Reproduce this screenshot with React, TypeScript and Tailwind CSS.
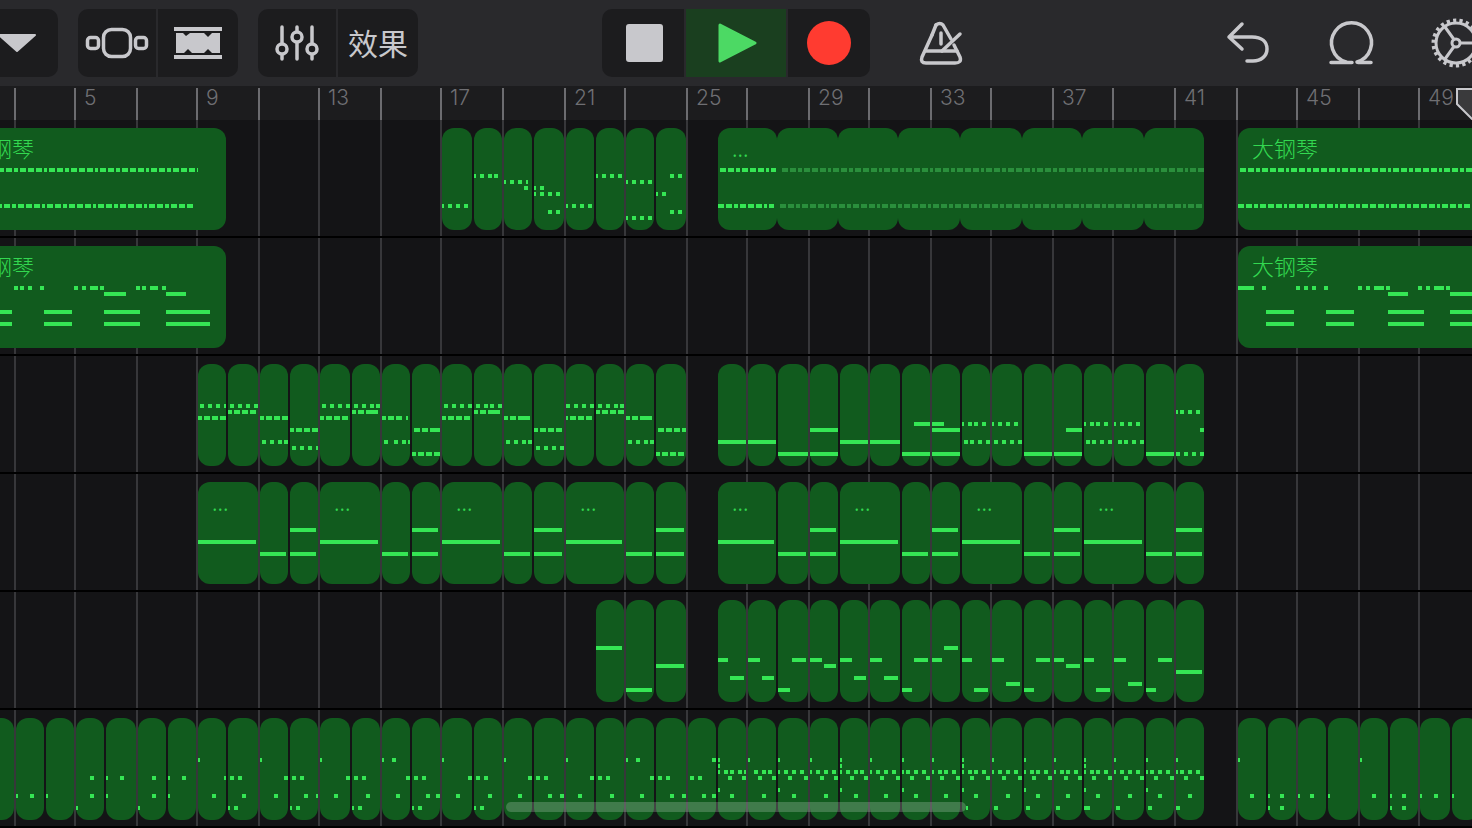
const TICKS = [14, 74, 136, 196, 258, 318, 380, 440, 502, 564, 624, 686, 746, 808, 868, 930, 990, 1052, 1112, 1174, 1236, 1296, 1358, 1418];
const LABELS: Record<number, string> = { 74: "5", 196: "9", 318: "13", 440: "17", 564: "21", 686: "25", 808: "29", 930: "33", 1052: "37", 1174: "41", 1296: "45", 1418: "49" };

type Clip = [number, number, string?];
type Notes = [number, string];

const A: Clip[] = [[198, 226], [228, 258], [260, 288], [290, 318], [320, 350], [352, 380], [382, 410], [412, 440], [442, 472], [474, 502], [504, 532], [534, 564], [566, 594], [596, 624], [626, 654], [656, 686]];
const B: Clip[] = [[718, 746], [748, 776], [778, 808], [810, 838], [840, 868], [870, 900], [902, 930], [932, 960], [962, 990], [992, 1022], [1024, 1052], [1054, 1082], [1084, 1112], [1114, 1144], [1146, 1174], [1176, 1204]];

function dashes(x0: number, x1: number) {
  const widths = [6, 6, 4, 6, 6, 6, 3];
  const parts: string[] = [];
  let x = x0;
  let i = 0;
  while (x < x1) {
    const w = widths[i % widths.length];
    parts.push(`${x}-${Math.min(x + w, x1)}`);
    x += w + 2;
    i += 1;
  }
  return parts.join(" ");
}

const TITLE = "大钢琴";

const TRACKS: { top: number; clips: Clip[]; notes: Notes[]; dim?: Notes[] }[] = [
  {
    top: 120,
    clips: [[-46, 226, TITLE], ...A.slice(8), [718, 777, "..."], [777, 838], [838, 898], [898, 960], [960, 1022], [1022, 1082], [1082, 1144], [1144, 1204], [1238, 1520, TITLE]],
    notes: [
      [170, dashes(-2, 198) + " " + dashes(1240, 1472) + " " + dashes(720, 776)],
      [206, dashes(-4, 194) + " " + dashes(1238, 1472) + " " + dashes(718, 774)],
      [206, "442-444 448-452 456-460 464-468 566-568 572-576 580-584 588-592"],
      [176, "474-476 480-484 488-492 494-498 596-598 602-606 610-614 618-622 670-674 678-682"],
      [182, "504-506 510-514 518-522 526-528 626-628 632-636 640-644 648-652"],
      [188, "524-528 534-536 540-544"],
      [194, "534-536 540-544 548-552 556-560 656-658 662-666"],
      [212, "548-552 556-560 670-674 678-682"],
      [218, "626-628 632-636 640-644 648-652"],
    ],
    dim: [
      [170, dashes(782, 1204)],
      [206, dashes(780, 1204)],
    ],
  },
  {
    top: 238,
    clips: [[-46, 226, TITLE], [1238, 1520, TITLE]],
    notes: [
      [288, "14-18 20-24 28-32 40-44 74-78 82-86 90-98 100-104 136-140 142-146 150-158 162-166 1238-1254 1262-1266 1296-1300 1304-1308 1312-1316 1324-1328 1358-1362 1366-1370 1374-1384 1386-1390 1418-1422 1426-1430 1434-1444 1446-1450"],
      [294, "104-126 166-186 1388-1408 1450-1472"],
      [312, "0-12 44-72 104-140 166-210 1266-1294 1326-1354 1388-1424 1450-1472"],
      [324, "0-12 44-72 104-140 166-210 1266-1294 1326-1354 1388-1424 1450-1472"],
    ],
  },
  {
    top: 356,
    clips: [...A, ...B],
    notes: [
      [406, "200-204 208-212 216-220 224-226 230-234 238-242 246-250 254-258 322-326 330-334 338-342 346-350 354-358 362-366 370-374 376-380 444-448 452-456 460-464 468-472 476-480 484-488 490-494 498-502 566-570 574-578 582-586 590-594 598-602 606-610 614-618 620-624"],
      [412, "228-232 234-240 242-248 250-256 352-356 358-364 366-378 474-478 480-486 488-500 596-600 602-608 610-616 618-624 1176-1178 1180-1184 1188-1192 1196-1200"],
      [418, "198-202 204-210 212-218 220-226 260-264 266-272 274-280 282-288 320-324 326-332 334-340 342-348 382-386 388-394 396-402 406-408 442-446 448-454 456-462 464-470 504-508 510-516 518-530 566-568 570-576 578-584 586-592 626-630 632-638 640-652"],
      [424, "914-930 932-944 962-964 968-972 974-978 982-986 992-994 998-1002 1006-1010 1014-1018 1084-1086 1090-1094 1096-1100 1104-1108 1114-1116 1120-1124 1128-1132 1136-1140"],
      [430, "290-294 296-302 304-310 312-318 414-420 422-428 430-440 534-538 540-546 548-554 556-562 658-664 666-672 674-680 682-686 810-838 932-960 1066-1082 1200-1204"],
      [442, "262-266 270-274 278-282 284-288 384-388 394-398 402-406 408-410 506-510 514-518 522-526 528-532 628-632 636-640 644-648 650-654 718-746 748-776 840-868 870-900 964-968 970-974 978-982 986-990 994-998 1002-1006 1010-1014 1018-1022 1086-1090 1092-1096 1100-1104 1108-1112 1118-1122 1124-1128 1132-1136 1140-1144"],
      [448, "292-296 300-304 308-312 316-318 536-540 544-548 552-556 560-564"],
      [454, "412-416 418-424 426-432 434-440 656-660 662-668 670-676 678-684 778-808 810-838 902-930 932-960 1024-1052 1054-1082 1146-1174 1176-1180 1184-1188 1192-1196 1200-1204"],
    ],
  },
  {
    top: 474,
    clips: [[198, 258, "..."], [260, 288], [290, 318], [320, 380, "..."], [382, 410], [412, 440], [442, 502, "..."], [504, 532], [534, 564], [566, 624, "..."], [626, 654], [656, 686], [718, 776, "..."], [778, 808], [810, 838], [840, 900, "..."], [902, 930], [932, 960], [962, 1022, "..."], [1024, 1052], [1054, 1082], [1084, 1144, "..."], [1146, 1174], [1176, 1204]],
    notes: [
      [530, "290-316 412-438 534-562 656-684 810-836 932-958 1054-1080 1176-1202"],
      [542, "198-256 320-378 442-500 566-622 718-774 840-898 962-1020 1084-1142"],
      [554, "260-286 290-316 382-408 412-438 504-530 534-562 626-652 656-684 778-806 810-836 902-928 932-958 1024-1050 1054-1080 1146-1172 1176-1202"],
    ],
  },
  {
    top: 592,
    clips: [[596, 624], [626, 654], [656, 686], ...B],
    notes: [
      [648, "596-622 944-958"],
      [660, "718-728 748-760 792-806 810-822 840-852 870-882 914-928 932-942 962-972 992-1004 1036-1050 1054-1064 1084-1094 1114-1126 1158-1172"],
      [666, "656-684 824-836 1066-1080"],
      [672, "1176-1202"],
      [678, "730-744 762-774 854-866 884-898"],
      [684, "1006-1020 1128-1142"],
      [690, "626-652 778-790 902-912 974-988 1024-1034 1096-1110 1146-1156"],
    ],
  },
  {
    top: 710,
    clips: [[-20, 14], [16, 44], [46, 74], [76, 104], [106, 136], [138, 166], [168, 196], ...A, [688, 716], ...B, [1238, 1266], [1268, 1296], [1298, 1326], [1328, 1358], [1360, 1388], [1390, 1418], [1420, 1450], [1452, 1480]],
    notes: [
      [760, "198-200 260-262 320-322 382-384 392-396 442-444 504-506 566-568 626-628 636-640 712-716 718-720 748-750 778-780 810-812 840-842 870-872 902-904 932-934 962-964 992-994 1024-1026 1054-1056 1084-1086 1114-1116 1146-1148 1176-1178 1238-1240 1360-1362"],
      [766, "718-720 840-842 962-964 1084-1086"],
      [772, "718-720 724-728 730-734 738-742 744-746 754-758 762-766 768-772 778-780 784-788 792-796 800-804 810-812 816-820 824-828 832-836 840-842 846-850 854-858 860-864 870-872 876-880 884-888 892-896 902-904 906-910 914-918 922-926 932-934 938-942 944-948 952-956 962-964 968-972 974-978 982-986 992-994 998-1002 1006-1010 1014-1018 1024-1026 1030-1034 1036-1040 1044-1048 1054-1056 1060-1064 1066-1070 1074-1078 1084-1086 1090-1094 1096-1100 1104-1108 1114-1116 1120-1124 1128-1132 1136-1140 1146-1148 1150-1154 1158-1162 1166-1170 1176-1178 1180-1184 1188-1192 1196-1200"],
      [778, "90-94 106-108 120-124 152-156 168-170 182-186 224-226 230-234 238-242 284-288 292-296 300-304 346-350 354-358 362-366 406-410 414-418 422-426 468-472 476-480 484-488 528-532 536-540 544-548 590-594 598-602 606-610 650-654 658-662 666-670 690-694 698-702 728-732 742-746 758-762 772-776 788-792 804-808 820-824 834-838 850-854 864-868 880-884 896-900 910-914 926-930 940-944 956-960 970-974 986-990 1002-1006 1018-1022 1032-1036 1048-1052 1064-1068 1078-1082 1092-1096 1108-1112 1124-1128 1140-1144 1154-1158 1170-1174 1184-1188 1200-1204"],
      [790, "718-720 778-780 840-842 902-904 962-964 1024-1026 1084-1086 1146-1148"],
      [796, "16-18 30-34 46-48 90-94 106-108 152-156 168-170 212-216 242-246 274-278 304-308 316-318 334-338 366-370 396-400 426-430 436-440 456-460 488-492 518-522 548-552 560-564 578-582 610-614 640-644 670-674 682-686 702-706 712-716 730-734 762-766 792-796 824-828 854-858 884-888 914-918 944-948 974-978 1006-1010 1036-1040 1066-1070 1096-1100 1128-1132 1158-1162 1188-1192 1250-1254 1268-1270 1280-1284 1298-1300 1310-1314 1328-1330 1372-1376 1390-1392 1402-1406 1420-1422 1434-1438 1452-1454"],
      [808, "76-78 138-140 228-230 234-238 290-292 296-300 352-354 358-362 412-414 418-422 474-476 480-484 966-968 994-998 1026-1030 1056-1060 1084-1090 1116-1120 1148-1152 1176-1180 1268-1270 1280-1284 1390-1392 1402-1406"],
    ],
  },
];

function NoteRects({ rows, fill }: { rows: Notes[]; fill: string }) {
  return (
    <>
      {rows.flatMap(([y, spec], r) =>
        spec.split(" ").map((seg, i) => {
          const m = seg.match(/^(-?\d+)-(-?\d+)$/);
          if (!m) return null;
          const a = Number(m[1]);
          const b = Number(m[2]);
          return <rect key={`${r}-${i}`} x={a} y={y - 2} width={b - a} height={4} fill={fill} />;
        })
      )}
    </>
  );
}

function TickRow({ children }: { children: (tick: number) => React.ReactNode }) {
  return (
    <>
      {TICKS.map((t, i) => (
        <div
          key={t}
          className="shrink-0"
          style={{ marginLeft: i === 0 ? t : 0, width: i < TICKS.length - 1 ? TICKS[i + 1] - t : 54 }}
        >
          {children(t)}
        </div>
      ))}
    </>
  );
}

function ClipBox({ clip, prevEnd }: { clip: Clip; prevEnd: number }) {
  const [a, b, title] = clip;
  return (
    <div
      className="shrink-0 h-[102px] rounded-[12px] bg-[#115b1e] overflow-hidden"
      style={{ marginLeft: a - prevEnd, width: b - a }}
    >
      {title && (
        <div className="pl-[14px] pt-[6px] text-[22px] leading-[26px] font-light text-[#33d850] whitespace-nowrap font-['Noto_Sans_CJK_SC','Noto_Sans',sans-serif]">
          {title}
        </div>
      )}
    </div>
  );
}

function Track({ top, clips, notes, dim }: (typeof TRACKS)[number]) {
  return (
    <div className="relative h-[118px] shrink-0 border-b-2 border-black">
      <div className="flex pt-2">
        {clips.map((c, i) => (
          <ClipBox key={c[0]} clip={c} prevEnd={i === 0 ? 0 : clips[i - 1][1]} />
        ))}
      </div>
      <svg
        className="absolute left-0 top-0 pointer-events-none"
        width={1472}
        height={116}
        viewBox={`0 ${top} 1472 116`}
        shapeRendering="crispEdges"
      >
        {dim && <NoteRects rows={dim} fill="#2a8f3c" />}
        <NoteRects rows={notes} fill="#35e654" />
      </svg>
    </div>
  );
}

const ICON = "#c8c8cc";

function Cell({ children, className }: { children?: React.ReactNode; className: string }) {
  return <div className={`h-full flex items-center justify-center ${className}`}>{children}</div>;
}

export default function App() {
  return (
    <div className="w-[1472px] h-[828px] overflow-hidden flex flex-col bg-[#141416] font-['Inter',sans-serif]">
      {/* Toolbar */}
      <div className="h-[86px] shrink-0 bg-[#29292c] flex items-center">
        <div className="shrink-0 ml-[-22px] w-[80px] h-[68px] rounded-[10px] bg-[#1c1c1e] flex items-center justify-center">
          <svg width="38" height="18" viewBox="-3 36 38 18" className="overflow-visible mr-[3px]">
            <path d="M-2 37 H34 L16 53 Z" fill={ICON} stroke={ICON} strokeWidth="2" strokeLinejoin="round" />
          </svg>
        </div>

        <div className="shrink-0 ml-5 w-[160px] h-[68px] rounded-[10px] overflow-hidden flex gap-[2px]">
          <Cell className="flex-1 bg-[#1c1c1e]">
            <svg width="62" height="30" viewBox="86 28 62 30" className="overflow-visible">
              <g fill="none" stroke={ICON} strokeWidth="3.5">
                <rect x="87.5" y="37.5" width="11" height="11" rx="3" />
                <rect x="103.5" y="29.5" width="27" height="27" rx="8" />
                <rect x="135.5" y="37.5" width="11" height="11" rx="3" />
              </g>
            </svg>
          </Cell>
          <Cell className="w-[80px] bg-[#1c1c1e]">
            <svg width="48" height="32" viewBox="174 27 48 32">
              <g fill={ICON}>
                <rect x="174" y="27" width="48" height="4" />
                <rect x="174" y="55" width="48" height="4" />
                <path d="M176 33 H183 L186 36 L190 33 H204 L208 37 L212 33 H220 V53 H212 L208 49 L204 53 H192 L188 49 L184 53 H176 Z" />
              </g>
            </svg>
          </Cell>
        </div>

        <div className="shrink-0 ml-5 w-[160px] h-[68px] rounded-[10px] overflow-hidden flex gap-[2px]">
          <Cell className="flex-1 bg-[#1c1c1e]">
            <svg width="46" height="36" viewBox="274 25 46 36" className="overflow-visible">
              <g stroke={ICON} strokeWidth="3.5" strokeLinecap="round">
                <line x1="282" y1="27" x2="282" y2="59" />
                <line x1="297" y1="27" x2="297" y2="59" />
                <line x1="312" y1="27" x2="312" y2="59" />
              </g>
              <g fill="#1c1c1e" stroke={ICON} strokeWidth="3.5">
                <circle cx="282" cy="49" r="5" />
                <circle cx="297" cy="37" r="5" />
                <circle cx="312" cy="49" r="5" />
              </g>
            </svg>
          </Cell>
          <Cell className="w-[80px] bg-[#1c1c1e] pb-[2px] text-[30px] text-[#c8c8cc] font-['Noto_Sans_CJK_SC',sans-serif]">效果</Cell>
        </div>

        <div className="shrink-0 ml-[184px] w-[268px] h-[68px] rounded-[10px] overflow-hidden flex gap-[2px]">
          <Cell className="w-[82px] bg-[#1c1c1e]">
            <div className="ml-[2px] w-[37px] h-[38px] rounded-[3px] bg-[#c8c8cc]" />
          </Cell>
          <Cell className="w-[100px] bg-[#1a3f1f]">
            <svg width="40" height="40" viewBox="718 23 40 40" className="ml-[3px] overflow-visible">
              <path d="M720 25 L755 43 L720 61 Z" fill="#4cd964" stroke="#4cd964" strokeWidth="3" strokeLinejoin="round" />
            </svg>
          </Cell>
          <Cell className="flex-1 bg-[#1c1c1e]">
            <div className="w-[44px] h-[44px] rounded-full bg-[#ff3b30]" />
          </Cell>
        </div>

        <svg width="42" height="42" viewBox="920 21 42 42" className="ml-[50px] shrink-0 overflow-visible">
          <g fill="none" stroke={ICON} strokeWidth="3.5" strokeLinecap="round" strokeLinejoin="round">
            <path d="M936 24 Q940 21 943 24 L951 38 M932 34 L922 56 Q920 62 926 62 H955 Q962 62 960 56 L954 44" />
            <path d="M936 24 L932 34" />
            <line x1="926" y1="50" x2="957" y2="50" />
            <line x1="941" y1="32" x2="941" y2="43" />
            <line x1="960" y1="33" x2="942" y2="50" />
          </g>
        </svg>

        <svg width="40" height="40" viewBox="1228 23 40 40" className="ml-[266px] shrink-0 overflow-visible">
          <path
            d="M1242 24 L1229 37 L1242 49 M1229 37 H1252 C1262 37 1267 42 1267 49 C1267 56 1261 61 1253 61 H1247"
            fill="none"
            stroke={ICON}
            strokeWidth="3.5"
            strokeLinecap="round"
            strokeLinejoin="round"
          />
        </svg>

        <svg width="44" height="42" viewBox="1329 20 44 42" className="ml-[61px] shrink-0 overflow-visible">
          <g fill="none" stroke={ICON} strokeWidth="3.5" strokeLinecap="round">
            <path d="M1346 60 A20 20 0 1 1 1357 60" />
            <path d="M1331 60.5 H1352 M1358 60.5 H1371" />
          </g>
        </svg>

        <svg width="50" height="50" viewBox="1431 18 50 50" className="ml-[58px] shrink-0 overflow-visible">
          <g fill="none" stroke={ICON}>
            <circle cx="1456" cy="43" r="20" strokeWidth="3" />
            <circle cx="1456" cy="43" r="22.5" strokeWidth="4" strokeDasharray="3.2 3.2" />
            <circle cx="1456" cy="43" r="4" strokeWidth="3" />
            <path d="M1460 43 H1480 M1454 39.5 L1445 27 M1454 46.5 L1445 59" strokeWidth="3" />
          </g>
        </svg>
      </div>

      {/* Ruler */}
      <div className="relative h-[34px] shrink-0 bg-[#1c1c1e] pt-[2px] flex">
        <TickRow>
          {(t) => (
            <div className="h-[32px] border-l-2 border-[#6c6c70] pl-[8px] text-[21px] leading-[20px] font-light text-[#6f6f73]">
              {LABELS[t]}
            </div>
          )}
        </TickRow>
        <svg width="16" height="34" viewBox="1457 86 16 34" className="absolute right-0 top-0 w-[16px]">
          <path d="M1458 89 H1474 V120 L1458 104 Z" fill="#3a3a3c" stroke="#c8c8cc" strokeWidth="2" />
        </svg>
      </div>

      {/* Tracks */}
      <div className="relative flex-1 overflow-hidden">
        <div className="absolute inset-0 flex">
          <TickRow>{() => <div className="h-full border-l-2 border-[#37373a]" />}</TickRow>
        </div>
        <div className="relative flex flex-col">
          {TRACKS.map((t) => (
            <Track key={t.top} {...t} />
          ))}
        </div>
        <div className="absolute left-[506px] top-[682px] w-[460px] h-[10px] rounded-full bg-white/20" />
      </div>
    </div>
  );
}
